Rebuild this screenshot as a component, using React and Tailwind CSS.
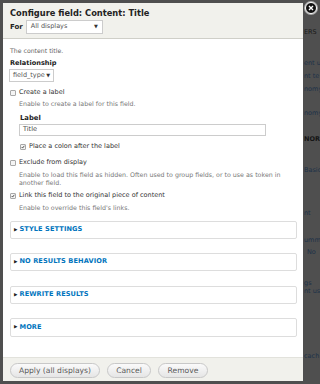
import React from "react";

function Checkbox({ checked }) {
  return (
    <span className="flex-none w-[6px] h-[6px] rounded-[1px] border border-[#a8a8a8] bg-[#f4f4f4] flex items-center justify-center">
      {checked && (
        <svg width="6" height="6" viewBox="0 0 6 6" className="block">
          <path d="M1 3 L2.4 4.6 L5 1.2" stroke="#333" strokeWidth="1.2" fill="none" />
        </svg>
      )}
    </span>
  );
}

function CheckRow({ checked, label, className }) {
  return (
    <div className={"flex items-center gap-[3px] h-[9px] text-[6.5px] leading-[9px] text-[#333] " + (className || "")}>
      <Checkbox checked={checked} />
      <span className="text-[#333]">{label}</span>
    </div>
  );
}

function Section({ title, className }) {
  return (
    <div className={"h-[18px] border border-[#ddd] rounded-[2px] flex items-center pl-[3px] gap-[2px] " + (className || "")}>
      <span className="text-[4.5px] leading-none text-[#222]">▶</span>
      <span className="text-[6.6px] font-bold text-[#0074bd] tracking-[0.1px]">{title}</span>
    </div>
  );
}

function Btn({ children, className }) {
  return (
    <button className={"h-[15px] rounded-full border border-[#c8c8c8] bg-gradient-to-b from-[#fafafa] to-[#e6e6e6] text-[7.6px] text-[#5a5a5a] leading-none " + (className || "")}>
      {children}
    </button>
  );
}

export default function App() {
  const behind = [
    { t: "ERS", mt: 28, c: "text-[#1a1a1a]" },
    { t: "ent u", mt: 23, c: "text-[#1d3148]" },
    { t: "nt te", mt: 5, c: "text-[#1d3148]" },
    { t: "nomy", mt: 5, c: "text-[#1d3148]" },
    { t: "nomy", mt: 16, c: "text-[#1d3148]" },
    { t: "NOR", mt: 18, c: "text-[#151515] font-bold" },
    { t: "Basic", mt: 23, c: "text-[#1d3148]" },
    { t: "nt", mt: 35, c: "text-[#1d3148]" },
    { t: "umm", mt: 19, c: "text-[#1d3148]" },
    { t: "No", mt: 4, c: "text-[#1d3148] pl-[3px]" },
    { t: "gs", mt: 23, c: "text-[#1d3148]" },
    { t: "nt us", mt: 0, c: "text-[#1d3148]" },
    { t: "cach", mt: 57, c: "text-[#1d3148]" },
  ];

  return (
    <div
      className="relative w-[320px] h-[384px] bg-[#4f4f4f] overflow-hidden flex"
      style={{ fontFamily: '"DejaVu Sans", Verdana, sans-serif' }}
    >
      <div className="ml-[3px] mt-[3px] w-[300px] h-[378px] bg-white flex flex-col flex-none">
        {/* header */}
        <div className="h-[36px] flex-none bg-[#f1f1ec] border-b border-[#cfcfc8] px-[7px] pt-[4px]">
          <div className="h-[12px] leading-[12px] text-[8.3px] font-bold text-[#222]">
            Configure field: Content: Title
          </div>
          <div className="mt-[1px] flex items-center gap-[3px]">
            <span className="text-[7px] font-bold text-[#222]">For</span>
            <div className="w-[77px] h-[14px] bg-white border border-[#ccc] flex items-center justify-between px-[4px]">
              <span className="text-[6.5px] text-[#555]">All displays</span>
              <span className="text-[5px] text-[#333]">▼</span>
            </div>
          </div>
        </div>

        {/* body */}
        <div className="flex-none h-[318px] px-[7px] pr-[6px] flex flex-col">
          <div className="mt-[8px] h-[8px] leading-[8px] text-[6.2px] text-[#666]">The content title.</div>
          <div className="mt-[3px] h-[10px] leading-[10px] text-[6.6px] font-bold text-[#222]">Relationship</div>
          <div className="mt-[1px] w-[45px] h-[13px] border border-[#ccc] bg-white flex items-center justify-between pl-[3px] pr-[3px] -ml-[1px]">
            <span className="text-[6.5px] text-[#555]">field_type</span>
            <span className="text-[5px] text-[#333]">▼</span>
          </div>

          <CheckRow className="mt-[6px]" label="Create a label" />
          <div className="mt-[3px] pl-[9px] h-[8px] leading-[8px] text-[6.3px] text-[#777]">
            Enable to create a label for this field.
          </div>
          <div className="pl-[10px]">
            <div className="mt-[5px] h-[10px] leading-[10px] text-[6.8px] font-bold text-[#222]">Label</div>
            <div className="mt-[1px] w-[247px] -ml-[1px] h-[12px] border border-[#ccc] flex items-center pl-[3px] text-[6.5px] text-[#444]">
              Title
            </div>
            <CheckRow className="mt-[6px]" checked label="Place a colon after the label" />
          </div>

          <CheckRow className="mt-[7px]" label="Exclude from display" />
          <div className="mt-[4px] pl-[9px] leading-[8px] text-[6.3px] text-[#777]">
            Enable to load this field as hidden. Often used to group fields, or to use as token in another field.
          </div>
          <CheckRow className="mt-[4px]" checked label="Link this field to the original piece of content" />
          <div className="mt-[4px] pl-[9px] h-[8px] leading-[8px] text-[6.3px] text-[#777]">
            Enable to override this field's links.
          </div>

          <Section className="mt-[9px]" title="STYLE SETTINGS" />
          <Section className="mt-[14px]" title="NO RESULTS BEHAVIOR" />
          <Section className="mt-[15px]" title="REWRITE RESULTS" />
          <Section className="mt-[14px] h-[19px]" title="MORE" />
        </div>

        {/* footer */}
        <div className="flex-1 bg-[#f1f1ec] border-t border-[#e2e2dc] flex items-start pt-[5px] pl-[7px] gap-[7px]">
          <Btn className="w-[90px]">Apply (all displays)</Btn>
          <Btn className="w-[44px]">Cancel</Btn>
          <Btn className="w-[50px]">Remove</Btn>
        </div>
      </div>

      {/* page behind the overlay */}
      <div className="flex-none w-[17px] ml-[1px] flex flex-col overflow-hidden">
        {behind.map((b, i) => (
          <div
            key={i}
            className={"whitespace-nowrap h-[8px] leading-[8px] text-[6.5px] " + b.c}
            style={{ marginTop: b.mt }}
          >
            {b.t}
          </div>
        ))}
      </div>

      {/* close button */}
      <div className="absolute left-[305px] top-[2px] w-[12px] h-[12px] rounded-full bg-[#111] border border-white shadow-[0_0_0_1px_#aaa] flex items-center justify-center">
        <svg width="6" height="6" viewBox="0 0 6 6">
          <path d="M1 1 L5 5 M5 1 L1 5" stroke="#fff" strokeWidth="1.4" />
        </svg>
      </div>
    </div>
  );
}
